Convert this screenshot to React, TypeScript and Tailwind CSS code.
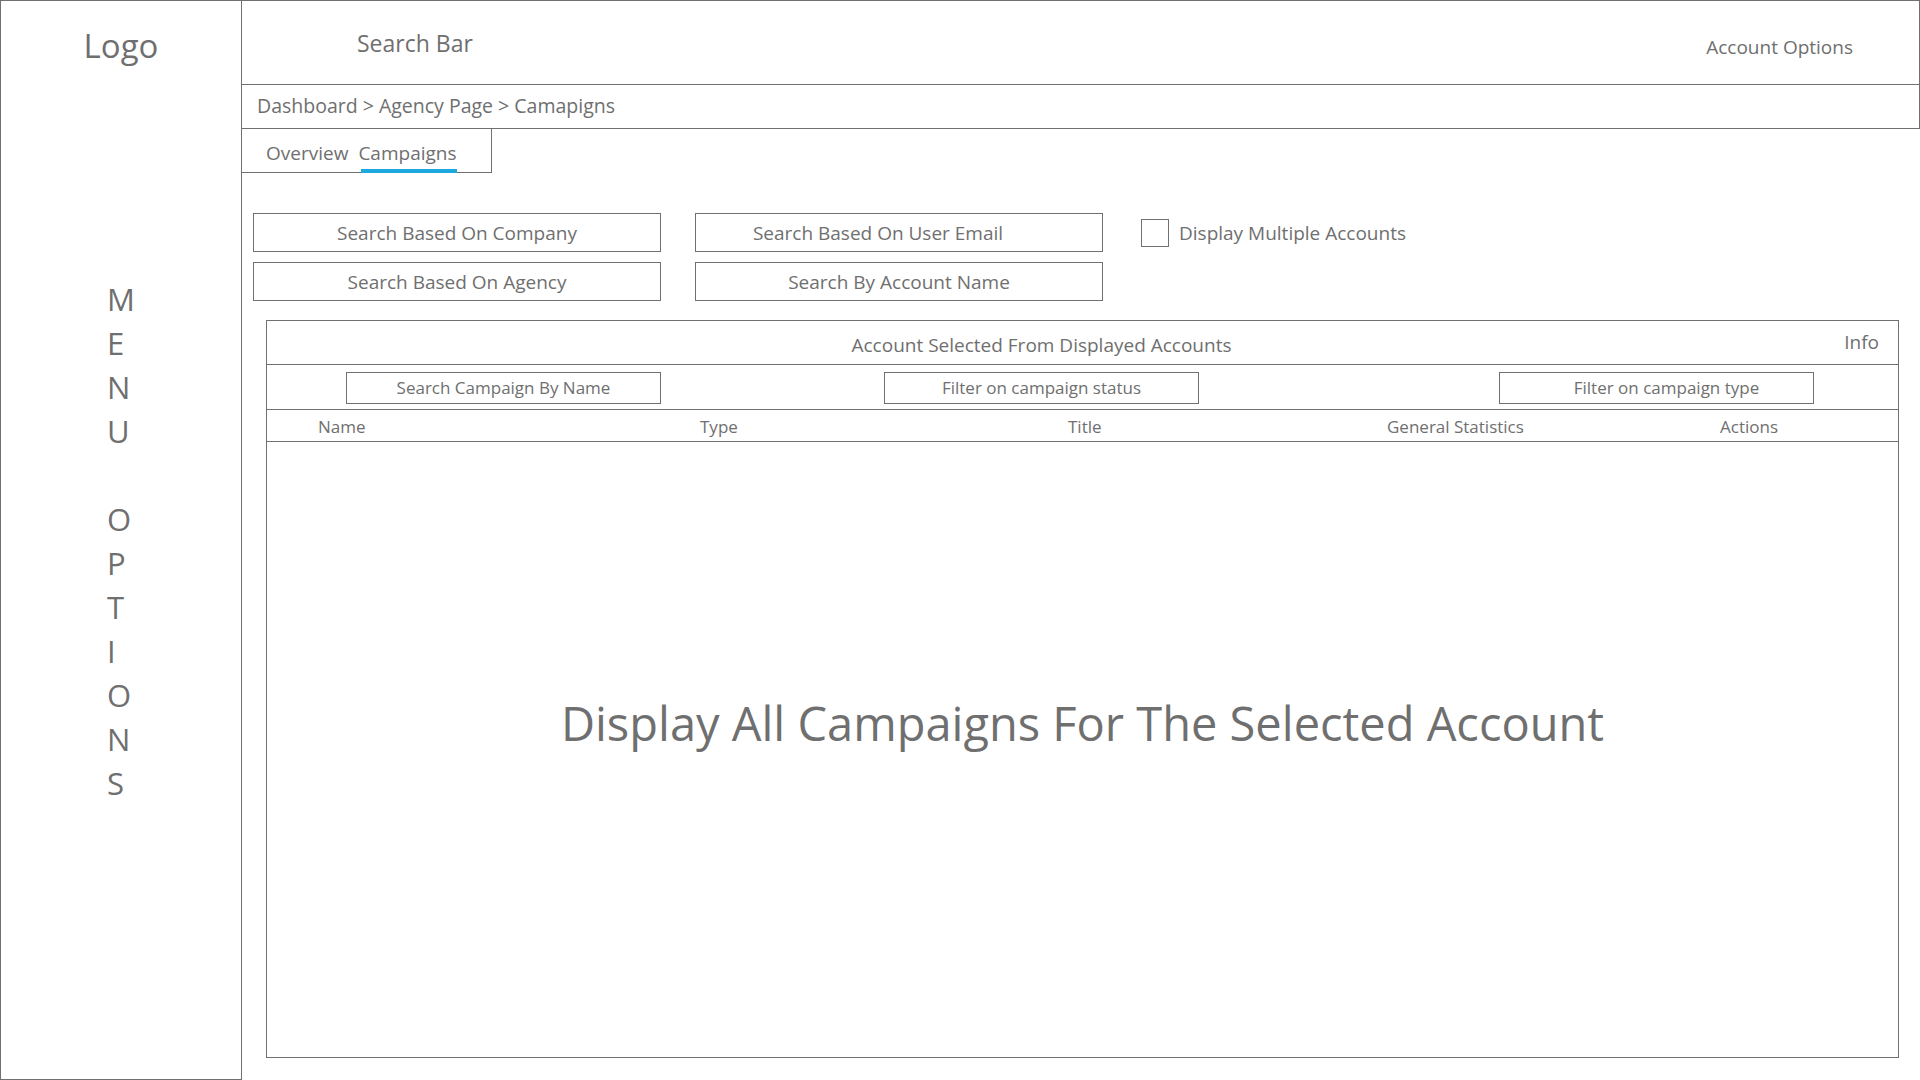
import React from "react";

const letters = ["M", "E", "N", "U", "\u00a0", "O", "P", "T", "I", "O", "N", "S"];

export default function App() {
  return (
    <div
      className="flex w-[1920px] h-[1080px] bg-white text-[#6f6f6f] overflow-hidden"
      style={{ fontFamily: '"Open Sans", "Noto Sans", sans-serif' }}
    >
      {/* Sidebar */}
      <aside className="w-[242px] h-full border border-[#707070] flex flex-col items-stretch shrink-0">
        <div className="pt-[21px] h-[70px] text-center text-[33px] leading-[48px]">Logo</div>
        <div className="mt-[206px] pl-[106px] flex flex-col text-[31px] leading-[44px]">
          {letters.map((l, i) => (
            <span key={i}>{l}</span>
          ))}
        </div>
      </aside>

      {/* Main */}
      <div className="flex-1 flex flex-col">
        <header className="h-[85px] border-t border-r border-b border-[#707070] flex items-center justify-between pl-[115px] pr-[66px]">
          <span className="text-[23px] leading-[32px] mt-[1px]">Search Bar</span>
          <span className="text-[19px] leading-[28px] mt-[8px]">Account Options</span>
        </header>
        <div className="h-[44px] border-r border-b border-[#707070] flex items-center pl-[15px] text-[19.5px] pb-[2px]">
          <span>Dashboard &gt; Agency Page &gt; Camapigns</span>
        </div>
        <div className="w-[250px] h-[44px] border-r border-b border-[#707070] flex items-end pl-[24px] text-[19px]">
          <span className="h-[40px] flex items-center mr-[10px] pt-[2px]">Overview</span>
          <span className="relative h-[40px] flex items-center pt-[2px]">
            Campaigns
            <span className="absolute left-[3px] right-0 -bottom-[1px] h-[4px] bg-[#1ea8e0]" />
          </span>
        </div>

        {/* Search controls */}
        <div className="pl-[11px] pt-[40px] flex flex-col gap-[10px]">
          <div className="flex items-center">
            <div className="w-[408px] h-[39px] border border-[#707070] flex items-center justify-center text-[19px] pt-[2px]">
              Search Based On Company
            </div>
            <div className="ml-[34px] w-[408px] h-[39px] border border-[#707070] flex items-center justify-center text-[19px] pr-[42px] pt-[2px]">
              Search Based On User Email
            </div>
            <div className="ml-[38px] w-[28px] h-[28px] border border-[#707070]" />
            <span className="ml-[10px] text-[19px] pt-[2px]">Display Multiple Accounts</span>
          </div>
          <div className="flex items-center">
            <div className="w-[408px] h-[39px] border border-[#707070] flex items-center justify-center text-[19px] pt-[2px]">
              Search Based On Agency
            </div>
            <div className="ml-[34px] w-[408px] h-[39px] border border-[#707070] flex items-center justify-center text-[19px] pt-[2px]">
              Search By Account Name
            </div>
          </div>
        </div>

        {/* Panel */}
        <div className="ml-[24px] mr-[21px] mt-[19px] mb-[22px] flex-1 border border-[#707070] flex flex-col">
          <div className="h-[44px] border-b border-[#707070] flex items-center relative">
            <div className="flex-1 text-center pr-[82px] pt-[6px] text-[19px]">Account Selected From Displayed Accounts</div>
            <span className="absolute right-[19px] top-[7px] text-[19px]">Info</span>
          </div>
          <div className="h-[45px] border-b border-[#707070] flex items-center text-[17px] pt-[1px]">
            <div className="ml-[79px] w-[315px] h-[32px] border border-[#707070] flex items-center justify-center">
              Search Campaign By Name
            </div>
            <div className="ml-[223px] w-[315px] h-[32px] border border-[#707070] flex items-center justify-center">
              Filter on campaign status
            </div>
            <div className="ml-[300px] w-[315px] h-[32px] border border-[#707070] flex items-center justify-center pl-[20px]">
              Filter on campaign type
            </div>
          </div>
          <div className="h-[32px] border-b border-[#707070] flex items-center text-[17px] pt-[2px]">
            <span className="pl-[51px] w-[433px]">Name</span>
            <span className="w-[368px]">Type</span>
            <span className="w-[319px]">Title</span>
            <span className="w-[333px]">General Statistics</span>
            <span>Actions</span>
          </div>
          <div className="flex-1 flex items-center justify-center pb-[54px]">
            <span className="text-[47px] leading-[60px]">Display All Campaigns For The Selected Account</span>
          </div>
        </div>
      </div>
    </div>
  );
}
